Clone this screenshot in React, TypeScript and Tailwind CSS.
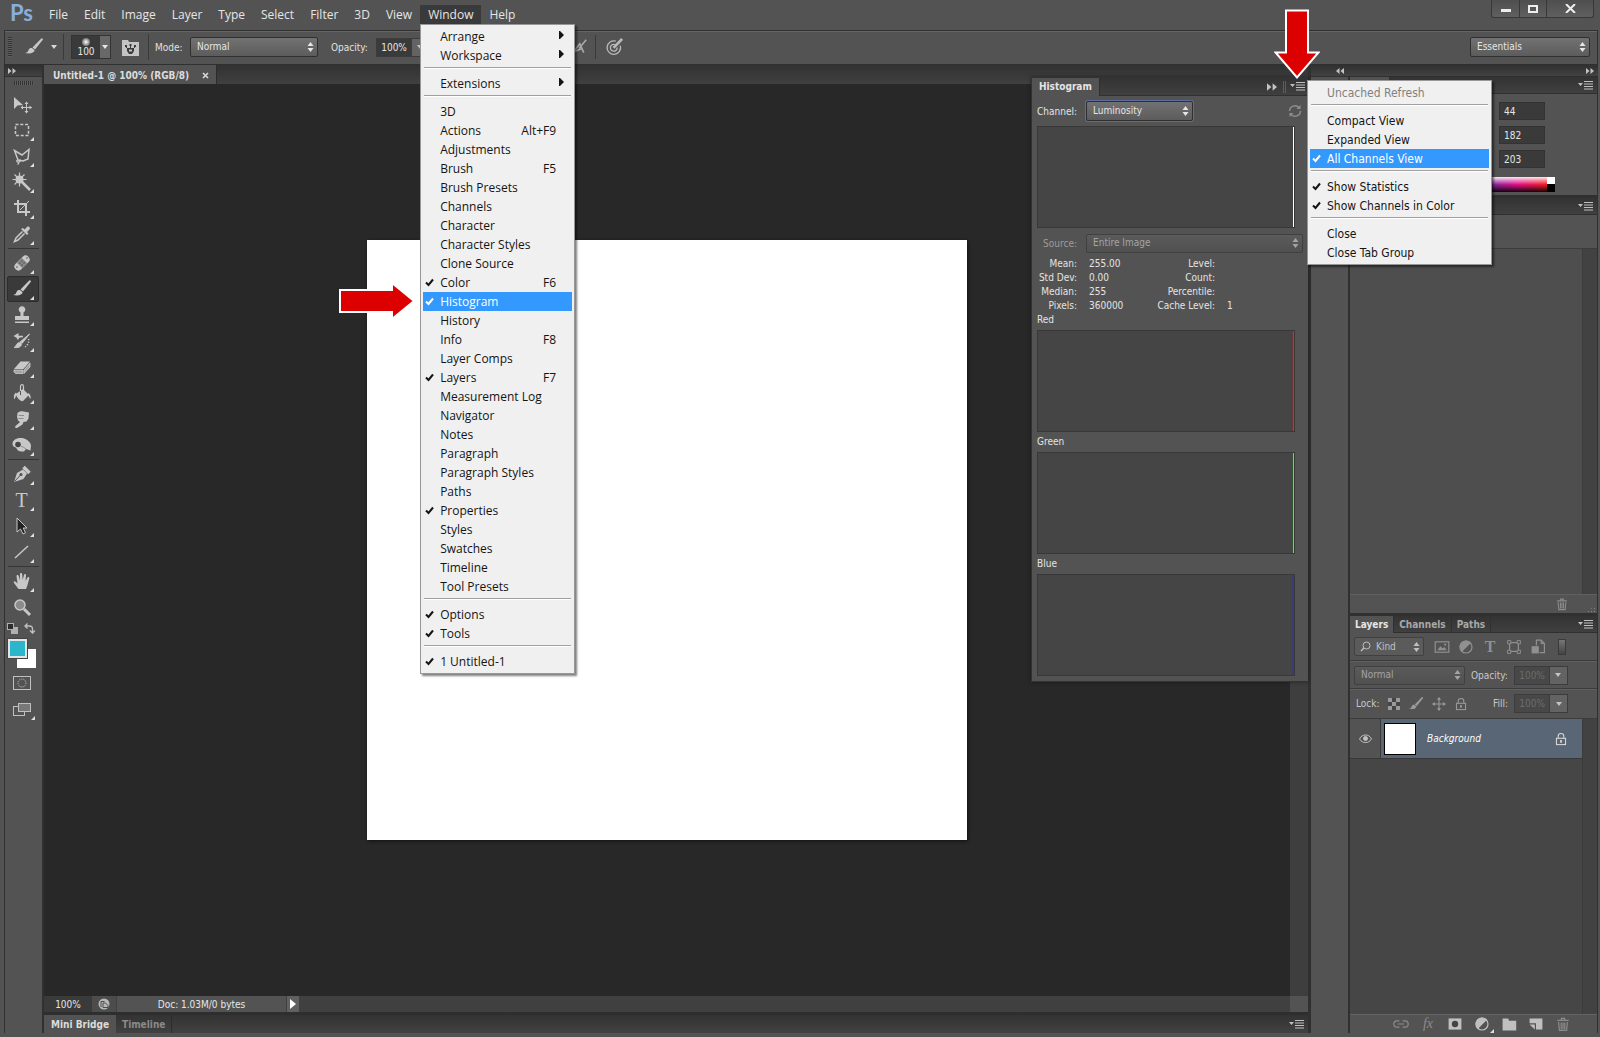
import type { ReactNode } from 'react';
import clsx from 'clsx';

interface MenuEntry {
    label: string;
    shortcut?: string;
    checked?: boolean;
    active?: boolean;
    disabled?: boolean;
    submenu?: boolean;
}

interface Tool {
    name: string;
    icon: ReactNode;
    flyout?: boolean;
    selected?: boolean;
}

const menuBefore = ['File', 'Edit', 'Image', 'Layer', 'Type', 'Select', 'Filter', '3D', 'View'];

const windowMenu: MenuEntry[][] = [
    [
        { label: 'Arrange', submenu: true },
        { label: 'Workspace', submenu: true },
    ],
    [{ label: 'Extensions', submenu: true }],
    [
        { label: '3D' },
        { label: 'Actions', shortcut: 'Alt+F9' },
        { label: 'Adjustments' },
        { label: 'Brush', shortcut: 'F5' },
        { label: 'Brush Presets' },
        { label: 'Channels' },
        { label: 'Character' },
        { label: 'Character Styles' },
        { label: 'Clone Source' },
        { label: 'Color', shortcut: 'F6', checked: true },
        { label: 'Histogram', checked: true, active: true },
        { label: 'History' },
        { label: 'Info', shortcut: 'F8' },
        { label: 'Layer Comps' },
        { label: 'Layers', shortcut: 'F7', checked: true },
        { label: 'Measurement Log' },
        { label: 'Navigator' },
        { label: 'Notes' },
        { label: 'Paragraph' },
        { label: 'Paragraph Styles' },
        { label: 'Paths' },
        { label: 'Properties', checked: true },
        { label: 'Styles' },
        { label: 'Swatches' },
        { label: 'Timeline' },
        { label: 'Tool Presets' },
    ],
    [
        { label: 'Options', checked: true },
        { label: 'Tools', checked: true },
    ],
    [{ label: '1 Untitled-1', checked: true }],
];

const histogramMenu: MenuEntry[][] = [
    [{ label: 'Uncached Refresh', disabled: true }],
    [
        { label: 'Compact View' },
        { label: 'Expanded View' },
        { label: 'All Channels View', checked: true, active: true },
    ],
    [
        { label: 'Show Statistics', checked: true },
        { label: 'Show Channels in Color', checked: true },
    ],
    [{ label: 'Close' }, { label: 'Close Tab Group' }],
];

const stats = [
    ['Mean:', '255.00', 'Level:', ''],
    ['Std Dev:', '0.00', 'Count:', ''],
    ['Median:', '255', 'Percentile:', ''],
    ['Pixels:', '360000', 'Cache Level:', '1'],
];

const channels = [
    { name: 'Red', line: 'w-[2px] border-l border-[#6c3434] bg-[#c03a3a]' },
    { name: 'Green', line: 'w-[2px] border-l border-[#2c5c30] bg-[#5fe05f]' },
    { name: 'Blue', line: 'w-[2px] border-l border-[#3a3a70] bg-[#3434b8]' },
];

function Svg({ size = 20, className, children }: { size?: number; className?: string; children: ReactNode }) {
    return (
        <svg
            width={size}
            height={size}
            viewBox="0 0 20 20"
            fill="none"
            stroke="currentColor"
            strokeWidth="1.5"
            className={clsx('shrink-0', className)}
            aria-hidden="true"
        >
            {children}
        </svg>
    );
}

const BrushShape = () => (
    <>
        <path d="M18.5 1.5 L19 2.5 L11 12.5 L8.5 10.5 L17.5 1.2z" fill="currentColor" stroke="none" />
        <path d="M8 11 L10.6 13.2 C10 16 6.500 17 1 16 C3.500 15.500 4 14.500 4.500 13 C5.200 11.200 6.500 10.700 8 11z" fill="currentColor" stroke="none" />
    </>
);

const MoveShape = () => (
    <>
        <path d="M10 2v16M2 10h16" />
        <path d="M10 0l3 4H7zM10 20l3-4H7zM0 10l4-3v6zM20 10l-4-3v6z" fill="currentColor" stroke="none" />
    </>
);

const TrashShape = () => (
    <>
        <path d="M3 5.500h14M8 5V3h4v2" />
        <path d="M4.500 7.500l1 10.500h9l1-10.500M7.800 8v8.500M10 8v8.500M12.200 8v8.500" />
    </>
);

const LockShape = () => (
    <>
        <path d="M6 9V6a4 4 0 0 1 8 0v3" />
        <rect x="3.500" y="9" width="13" height="9" />
        <path d="M10 11.500v4" strokeWidth="2.500" />
    </>
);

const HalfCircleShape = () => (
    <>
        <circle cx="10" cy="10" r="7.500" />
        <path d="M4.700 15.300A7.500 7.500 0 0 1 15.300 4.700z" fill="currentColor" />
    </>
);

const toolGroups: Tool[][] = [
    [
        {
            name: 'Move',
            icon: (
                <Svg>
                    <path d="M2 3v12l3.500-3.500L11 11z" fill="currentColor" stroke="none" />
                    <path d="M14.500 8.500v10M9.500 13.500h10" strokeWidth="1" />
                    <path d="M14.500 7.500l2 2.500h-4zM14.500 19.500l2-2.500h-4zM8.500 13.500l2.500-2v4zM20 13.500l-2.500-2v4z" fill="currentColor" stroke="none" />
                </Svg>
            ),
        },
        {
            name: 'Rectangular marquee',
            flyout: true,
            icon: (
                <Svg>
                    <rect x="3.500" y="4.500" width="13" height="11" strokeDasharray="3 1.800" />
                </Svg>
            ),
        },
        {
            name: 'Polygonal lasso',
            flyout: true,
            icon: (
                <Svg>
                    <path d="M6 14L2.500 4.500L10 9l7-5.500-1 9.500-5 2z" />
                    <path d="M6 14c-2 0-1.500 2.500.5 2s3-2 1-2.200M7 16c0 1.500-1 2-1.500 2.500" strokeWidth="1.200" />
                </Svg>
            ),
        },
        {
            name: 'Magic wand',
            flyout: true,
            icon: (
                <Svg>
                    <path d="M7.500 0.500v14M0.500 7.500h14M2.500 2.500l10 10M12.500 2.500l-10 10" strokeWidth="1.200" />
                    <circle cx="7.500" cy="7.500" r="4" fill="currentColor" stroke="none" />
                    <path d="M10 10l8 8" strokeWidth="2.500" />
                </Svg>
            ),
        },
        {
            name: 'Crop',
            flyout: true,
            icon: (
                <Svg>
                    <path d="M6 2v12h12M2 6h12v12" strokeWidth="2" />
                    <path d="M8 12L17 3" strokeWidth="1" />
                </Svg>
            ),
        },
        {
            name: 'Eyedropper',
            flyout: true,
            icon: (
                <Svg>
                    <path d="M10.500 7.500L4 14l-1.500 3.500L6 16l6.500-6.500" />
                    <path d="M9 5l6 6 1.500-1.500-1.500-1.500 2.500-2.500c1.500-1.500-1-4-2.500-2.500L12.500 5.500 11 4z" fill="currentColor" stroke="none" />
                </Svg>
            ),
        },
    ],
    [
        {
            name: 'Healing brush',
            flyout: true,
            icon: (
                <Svg>
                    <rect x="1" y="6" width="18" height="8" rx="4" transform="rotate(-45 10 10)" fill="currentColor" stroke="none" />
                    <rect x="6.500" y="6" width="7" height="8" transform="rotate(-45 10 10)" fill="#888888" stroke="none" />
                    <path d="M10 8v.1M12 10v.1M8 10v.1M10 12v.1M5 14v.1M15 5v.1" stroke="#444444" strokeLinecap="round" />
                </Svg>
            ),
        },
        { name: 'Brush', flyout: true, selected: true, icon: <Svg><BrushShape /></Svg> },
        {
            name: 'Clone stamp',
            flyout: true,
            icon: (
                <Svg>
                    <path d="M8.500 7.500a3.300 3.300 0 1 1 3 0L11.500 11H17v4H3v-4h5.500zM3 16.500h14V18H3z" fill="currentColor" stroke="none" />
                </Svg>
            ),
        },
        {
            name: 'History brush',
            flyout: true,
            icon: (
                <Svg>
                    <path d="M17.500 3L10 12.500 8 11zM7.500 11.500l2 2C9 16 6 17 2 16.500c3-1.500 2-4.500 5.500-5z" fill="currentColor" strokeWidth="1" />
                    <path d="M11 5.500H5M10 5.500c-2 0-4 1-4.500 3" />
                    <path d="M1.500 5l5-3v6z" fill="currentColor" stroke="none" />
                    <path d="M16.500 8c1 3-1 7.500-5 8.500" strokeDasharray="1.200 1.500" />
                </Svg>
            ),
        },
        {
            name: 'Eraser',
            flyout: true,
            icon: (
                <Svg>
                    <path d="M2 12L8.500 4.500H18L11.500 12z" fill="currentColor" stroke="none" />
                    <path d="M2 13h9v3.500H3.500L2 15zM12 13l6-7v4l-6 6.500z" fill="#a4a4a4" stroke="#d8d8d8" strokeWidth=".7" />
                </Svg>
            ),
        },
        {
            name: 'Paint bucket',
            flyout: true,
            icon: (
                <Svg>
                    <path d="M4 11l7-5 6 6-6 6c-2 1-6.500-3-7-7z" fill="currentColor" stroke="none" />
                    <path d="M8.500 11V3.500c0-2.500 3-2.500 3 0V8" strokeWidth="1.200" />
                    <path d="M8.500 8v4" stroke="#555555" strokeWidth="1" />
                    <path d="M4 9.500c-2.500 2-2.500 4.500-1.500 7C3.500 15 3.500 13 5 11.500z" fill="currentColor" stroke="none" />
                    <path d="M16 10c2.500 1 3 3.500 2.500 6-1.500-1-1.500-3-2.500-4z" fill="currentColor" stroke="none" />
                </Svg>
            ),
        },
        {
            name: 'Smudge',
            flyout: true,
            icon: (
                <Svg>
                    <path d="M5.500 4c2-2 4-2 6-1.500L17 3.500l-.5 6-2 3-3 .5-1 2.500-5.500 3.500c-1.500.5-2.500-1-1.500-2L8 13l-2-1.500-1-4z" fill="currentColor" stroke="none" />
                    <path d="M6.500 6.500H12M6.500 9.500h5" stroke="#8c8c8c" strokeWidth="1" />
                </Svg>
            ),
        },
        {
            name: 'Sponge',
            flyout: true,
            icon: (
                <Svg>
                    <path d="M.5 8c1-4 5-5.500 10-5 4 1 8 3.500 8.500 7.500l-.5 5-4.500-1.500-2 2.500c-5 .5-7-1.500-8-4C1.500 12 .2 10.500.5 8z" fill="currentColor" stroke="none" />
                    <circle cx="6" cy="9.500" r="2.800" fill="#444444" stroke="none" />
                    <path d="M9 11.500c1.500 0 3 1 5 2.500" stroke="#8c8c8c" strokeWidth="1" />
                </Svg>
            ),
        },
    ],
    [
        {
            name: 'Pen',
            flyout: true,
            icon: (
                <Svg>
                    <path d="M2 18L5 9l6-3.500 4 4L11.500 15z" fill="currentColor" stroke="none" />
                    <path d="M2.500 17.500L8.500 11" stroke="#505050" strokeWidth="1" />
                    <circle cx="9" cy="10.500" r="1.500" fill="#505050" stroke="none" />
                    <path d="M11.500 3l6 6" strokeWidth="3.500" />
                </Svg>
            ),
        },
        {
            name: 'Type',
            flyout: true,
            icon: <span className="w-5 text-center font-['Liberation_Serif',serif] text-[20px] leading-5">T</span>,
        },
        {
            name: 'Path selection',
            flyout: true,
            icon: (
                <Svg>
                    <path d="M5 2v14l3.500-3 2.500 5 2.500-1.200L11.200 12H15z" fill="#222222" strokeWidth="1" />
                </Svg>
            ),
        },
        { name: 'Line', flyout: true, icon: <Svg><path d="M3 16L16 4" /></Svg> },
    ],
    [
        {
            name: 'Hand',
            flyout: true,
            icon: (
                <Svg>
                    <path d="M6.500 18L2 12c-1-1.500.5-2.500 2-1l1.500 1.500L4.500 5c0-1.500 2-1.500 2.200 0l1 4.500L8 3c0-1.500 2-1.500 2.200 0l.5 6L12 4c.3-1.500 2-1 2 .2L13.500 10 15.500 6.500c.7-1.200 2.200-.5 1.800 1L15.500 14 14 18z" fill="currentColor" stroke="none" />
                </Svg>
            ),
        },
        {
            name: 'Zoom',
            icon: (
                <Svg>
                    <circle cx="8" cy="8" r="5" fill="#8b8b8b" />
                    <path d="M12 12l6 6" strokeWidth="3" />
                </Svg>
            ),
        },
    ],
];

function CheckMark() {
    return (
        <svg width="9" height="9" viewBox="0 0 9 9" fill="none" stroke="currentColor" strokeWidth="2" aria-hidden="true">
            <path d="M1 4.500l2.500 2.500L8 1.500" />
        </svg>
    );
}

function PopupMenu({ groups, className }: { groups: MenuEntry[][]; className?: string }) {
    return (
        <div
            role="menu"
            className={clsx(
                'absolute z-30 border border-[#979797] bg-[#f0f0f0] p-[2px] text-xs text-[#141414] shadow-[2px_2px_2px_rgba(0,0,0,0.5)]',
                className,
            )}
        >
            {groups.map((group, index) => (
                <div key={group[0].label}>
                    {index > 0 ? <div className="mx-px mt-[2px] mb-[5px] h-[2px] border-t border-[#a0a0a0] bg-white" /> : null}
                    {group.map((entry) => (
                        <button
                            key={entry.label}
                            type="button"
                            role="menuitem"
                            disabled={entry.disabled}
                            className={clsx(
                                'flex h-[19px] w-full items-center pr-4 text-left whitespace-nowrap',
                                entry.active && 'bg-[#3399ff] text-white',
                                entry.disabled && 'text-[#808080]',
                            )}
                        >
                            <span className="w-[17px] shrink-0 pl-[2px]">{entry.checked ? <CheckMark /> : null}</span>
                            <span className="flex-1">{entry.label}</span>
                            {entry.shortcut ? <span>{entry.shortcut}</span> : null}
                            {entry.submenu ? (
                                <svg width="5" height="8" viewBox="0 0 5 8" className="-mr-2 mb-1" fill="currentColor" aria-hidden="true">
                                    <path d="M0 0h1l4 4-4 4H0z" />
                                </svg>
                            ) : null}
                        </button>
                    ))}
                </div>
            ))}
        </div>
    );
}

function UpDown() {
    return (
        <svg
            width="7"
            height="10"
            viewBox="0 0 7 10"
            fill="currentColor"
            className="pointer-events-none absolute inset-y-0 right-1 my-auto"
            aria-hidden="true"
        >
            <path d="M3.500 0L6.500 4h-6zM3.500 10l3-4h-6z" />
        </svg>
    );
}

function Dropdown({ label, id, value, className, muted, focus }: {
    label: string;
    id: string;
    value: string;
    className?: string;
    muted?: boolean;
    focus?: boolean;
}) {
    return (
        <span className={clsx('relative block shrink-0', muted ? 'text-[#a4a4a4]' : 'text-[#e6e6e6]', className)}>
            <select
                id={id}
                aria-label={label}
                className={clsx(
                    'block w-full appearance-none rounded-[2px] border bg-linear-to-b px-[6px] leading-4 outline-none',
                    muted ? 'h-[19px] border-[#404040] from-[#5b5b5b] to-[#505050]' : 'h-5 border-[#303030] from-[#727272] to-[#5c5c5c]',
                    focus && 'shadow-[0_0_0_1px_#5c6c9c]',
                )}
            >
                <option>{value}</option>
            </select>
            <UpDown />
        </span>
    );
}

function PanelMenuIcon() {
    return (
        <svg width="15" height="9" viewBox="0 0 15 9" className="shrink-0 text-[#c0c0c0]" fill="currentColor" aria-hidden="true">
            <path d="M0 2h5L2.500 5zM6 0h9v1H6zM6 2.500h9v1H6zM6 5h9v1H6zM6 7.500h9v1H6z" />
        </svg>
    );
}

function DoubleArrow({ left, large }: { left?: boolean; large?: boolean }) {
    return (
        <svg
            width={large ? 10 : 8}
            height={large ? 8 : 6}
            viewBox="0 0 8 6"
            className={clsx('shrink-0 text-[#c4c4c4]', left && 'rotate-180')}
            fill="currentColor"
            aria-hidden="true"
        >
            <path d="M0 0l3.500 3L0 6zM4.500 0L8 3 4.500 6z" />
        </svg>
    );
}

function Caret() {
    return (
        <svg width="6" height="4" viewBox="0 0 6 4" fill="currentColor" className="shrink-0" aria-hidden="true">
            <path d="M0 0h6L3 4z" />
        </svg>
    );
}

function FlyoutMark({ className }: { className?: string }) {
    return (
        <svg width="4" height="4" viewBox="0 0 4 4" fill="#e0e0e0" className={clsx('absolute', className)} aria-hidden="true">
            <path d="M4 0v4H0z" />
        </svg>
    );
}

function PercentField({ label, id, bright }: { label: string; id: string; bright?: boolean }) {
    return (
        <div className="flex items-center">
            <label htmlFor={id} className={clsx(bright ? 'mr-2' : 'mr-[6px]')}>{label}</label>
            <input
                id={id}
                defaultValue="100%"
                className={clsx(
                    'h-[19px] w-9 border border-[#3c3c3c] pr-1 text-right outline-none',
                    bright ? 'bg-[#3a3a3a] text-[#e6e6e6]' : 'bg-[#484848] text-[#6c6c6c]',
                )}
            />
            <button
                type="button"
                aria-label={`${label} slider`}
                className="flex h-[19px] w-[18px] items-center justify-center border border-l-0 border-[#3c3c3c] bg-[#636363] text-[#c4c4c4]"
            >
                <Caret />
            </button>
        </div>
    );
}

function MenuBar() {
    return (
        <header className="flex h-[30px] items-start justify-between pl-[10px]">
            <div className="flex">
                <span className="w-[31px] font-['Lato','Open_Sans',sans-serif] text-[22px] leading-[26px] font-bold text-[#8aaedb]">Ps</span>
                <nav className="flex items-start pt-[5px] text-xs text-[#e6e6e6]">
                    {menuBefore.map((item) => (
                        <button key={item} type="button" className="h-[19px] px-2">{item}</button>
                    ))}
                    <div className="relative h-[19px]">
                        <button type="button" aria-expanded="true" className="block h-[19px] bg-[#3a3a3a] px-2">Window</button>
                        <PopupMenu groups={windowMenu} className="top-full left-0 w-[155px]" />
                        <svg
                            width="78"
                            height="40"
                            viewBox="0 0 78 40"
                            className="absolute top-[276px] right-full z-40 mr-1"
                            aria-hidden="true"
                        >
                            <path d="M2 9h52V2l22 18-22 18v-7H2z" fill="#dd0000" stroke="#ffffff" strokeWidth="2" />
                        </svg>
                    </div>
                    <button type="button" className="h-[19px] px-2">Help</button>
                </nav>
            </div>
            <div className="mr-[6px] flex h-[18px] rounded-b-[3px] border border-t-0 border-[#383838] bg-linear-to-b from-[#4e4e4e] to-[#606060] text-[#eeeeee]">
                <button type="button" aria-label="Minimize" className="flex w-7 items-center justify-center border-r border-[#383838]">
                    <span className="mt-1 h-[3px] w-[10px] bg-current" />
                </button>
                <button type="button" aria-label="Restore" className="flex w-[27px] items-center justify-center border-r border-[#383838]">
                    <span className="h-2 w-[10px] border-2 border-current" />
                </button>
                <button type="button" aria-label="Close" className="flex w-[46px] items-center justify-center">
                    <svg width="11" height="9" viewBox="0 0 11 9" stroke="currentColor" strokeWidth="2" aria-hidden="true">
                        <path d="M1 0l9 9M10 0L1 9" />
                    </svg>
                </button>
            </div>
        </header>
    );
}

function OptionsBar() {
    return (
        <div className="mr-[2px] ml-1 flex h-[35px] items-center justify-between border border-[#303030] pr-[7px] pb-px pl-[3px] shadow-[inset_0_1px_0_#656565]">
            <div className="flex items-center">
                <span className="h-5 w-1 bg-[repeating-linear-gradient(to_bottom,#333333_0_1px,#5e5e5e_1px_2px)]" />
                <Svg className="ml-3 text-[#c8c8c8]"><BrushShape /></Svg>
                <span className="ml-[7px] text-[#d8d8d8]"><Caret /></span>
                <span className="ml-[6px] h-[26px] w-px bg-[#3a3a3a]" />
                <button type="button" aria-label="Brush preset" className="ml-[7px] flex h-6 border border-[#333333] text-[#e6e6e6]">
                    <span className="flex w-7 flex-col items-center justify-end bg-[#3a3a3a]">
                        <span className="h-2 w-2 rounded-full bg-[radial-gradient(#ffffff,#3a3a3a)]" />
                        <span className="leading-3">100</span>
                    </span>
                    <span className="flex w-[10px] items-center justify-center self-stretch bg-[#686868]"><Caret /></span>
                </button>
                <svg width="17" height="17" viewBox="0 0 17 17" className="ml-[11px]" aria-hidden="true">
                    <path d="M0 1h6l1 2h10v14H0z" fill="#c4c4c4" />
                    <path d="M3 6h2v2H3zM7.500 5h2v2h-2zM12 6h2v2h-2z" fill="#3a3a3a" />
                    <path d="M4 8l2 2M13 8l-2 2M8.500 6v3" stroke="#3a3a3a" />
                    <path d="M5 9h7v3l-2 3H7l-2-3z" fill="#3a3a3a" />
                    <path d="M7 10.500h3v2H7z" fill="#c4c4c4" />
                </svg>
                <span className="ml-[9px] h-[26px] w-px bg-[#3a3a3a]" />
                <label htmlFor="brush-mode" className="ml-[6px] w-[35px] text-[#e0e0e0]">Mode:</label>
                <Dropdown id="brush-mode" label="Mode" value="Normal" className="w-32" />
                <div className="ml-[13px] text-[#e0e0e0]">
                    <PercentField label="Opacity:" id="brush-opacity" bright />
                </div>
                <Svg size={16} className="ml-[141px] text-[#a8a8a8]">
                    <path d="M19 1l-9 11M3 16l8-10 5 11M1 17l13-5" strokeWidth="2" />
                </Svg>
                <span className="ml-2 h-6 w-px bg-[#3a3a3a]" />
                <Svg size={18} className="ml-[9px] text-[#b8b8b8]">
                    <path d="M12 3.500a7.500 7.500 0 1 0 5 5M11.500 7.500a3.800 3.800 0 1 0 2 3" />
                    <path d="M19 1l-9.500 10" strokeWidth="3" />
                </Svg>
            </div>
            <Dropdown id="workspace" label="Workspace" value="Essentials" className="w-[120px]" />
        </div>
    );
}

function Toolbar() {
    return (
        <aside className="flex w-[38px] shrink-0 flex-col border-l border-[#303030] bg-[#535353] text-[#c8c8c8]">
            <div className="flex h-3 items-center border-b border-[#303030] bg-linear-to-b from-[#303030] to-[#424242] pl-[3px]">
                <DoubleArrow />
            </div>
            <span className="mx-auto mt-1 mb-[6px] h-1 w-5 shrink-0 bg-[repeating-linear-gradient(to_right,#333333_0_1px,#5e5e5e_1px_2px)]" />
            {toolGroups.map((group, index) => (
                <div key={group[0].name} className="px-[2px]">
                    {index > 0 ? <div className="mx-px my-px h-px bg-[#363636]" /> : null}
                    {group.map((tool) => (
                        <button
                            key={tool.name}
                            type="button"
                            aria-label={tool.name}
                            className={clsx(
                                'relative flex h-[26px] w-8 items-center justify-center rounded-[2px] border pr-[3px]',
                                tool.selected ? 'border-[#2c2c2c] bg-[#3a3a3a]' : 'border-transparent',
                            )}
                        >
                            {tool.icon}
                            {tool.flyout ? <FlyoutMark className="right-1 bottom-px" /> : null}
                        </button>
                    ))}
                </div>
            ))}
            <div className="mt-[2px] flex h-3 items-center justify-between pr-[7px] pl-[2px]">
                <svg width="11" height="11" viewBox="0 0 11 11" aria-hidden="true">
                    <rect x="4" y="4" width="7" height="7" fill="#b0b0b0" />
                    <rect x=".5" y=".5" width="6" height="6" fill="#2c2c2c" stroke="#b0b0b0" />
                </svg>
                <svg width="11" height="11" viewBox="0 0 11 11" fill="none" stroke="#c0c0c0" strokeWidth="1.300" aria-hidden="true">
                    <path d="M1 3h4.500c2 0 3 1 3 3v4M3.500 .5L1 3l2.500 2.500M6 7.500L8.500 10 11 7.500" />
                </svg>
            </div>
            <div className="relative mt-[5px] ml-[3px] h-[29px]">
                <button type="button" aria-label="Background color" className="absolute top-[10px] left-[9px] size-[19px] bg-white" />
                <button type="button" aria-label="Foreground color" className="absolute top-0 left-0 size-[19px] border-2 border-[#e4e4e4] bg-[#2cb6cb] outline outline-[#444444]" />
            </div>
            <button type="button" aria-label="Quick mask" className="mt-2 ml-2 h-[14px] w-[18px]">
                <svg width="18" height="14" viewBox="0 0 18 14" fill="none" stroke="#c0c0c0" aria-hidden="true">
                    <rect x=".5" y=".5" width="17" height="13" />
                    <circle cx="9" cy="7" r="4" strokeDasharray="1.200 1" />
                </svg>
            </button>
            <button type="button" aria-label="Screen mode" className="relative mt-3 ml-2 h-[18px] w-6">
                <svg width="24" height="18" viewBox="0 0 24 18" fill="none" stroke="#c0c0c0" aria-hidden="true">
                    <rect x=".5" y="4.500" width="11" height="9" />
                    <rect x="5.500" y="1.500" width="12" height="8" fill="#787878" />
                </svg>
                <FlyoutMark className="right-[2px] bottom-0" />
            </button>
        </aside>
    );
}

function Graph({ line }: { line: string }) {
    return (
        <div className="mr-2 flex h-[102px] justify-end border border-[#383838] bg-[#454545]">
            <span className={line} />
        </div>
    );
}

function HistogramPanel() {
    return (
        <section className="absolute top-3 right-0 z-20 w-[277px] border border-r-0 border-[#333333] bg-[#535353] pb-[2px] text-[#e4e4e4] shadow-[0_0_4px_rgba(0,0,0,0.4)]">
            <div className="flex h-[18px] items-center border-b border-[#303030] bg-linear-to-b from-[#333333] to-[#404040] pr-[3px]">
                <h2 className="flex h-[18px] items-center border-r border-[#303030] bg-[#535353] px-[7px] font-bold">Histogram</h2>
                <span className="mr-[6px] ml-auto"><DoubleArrow large /></span>
                <span className="mr-1 h-3 w-[3px] border-x border-[#5e5e5e]" />
                <button type="button" aria-label="Histogram panel menu"><PanelMenuIcon /></button>
            </div>
            <div className="px-[5px]">
                <div className="mt-[5px] flex h-5 items-center">
                    <label htmlFor="channel" className="w-10 text-right">Channel:</label>
                    <Dropdown id="channel" label="Channel" value="Luminosity" focus className="ml-[9px] w-[107px]" />
                    <svg width="14" height="14" viewBox="0 0 14 14" className="mr-px ml-auto text-[#8e8e8e]" fill="none" stroke="currentColor" strokeWidth="1.500" aria-hidden="true">
                        <path d="M1.500 7a5.500 5.500 0 0 1 9.500-3.500M12.500 7a5.500 5.500 0 0 1-9.500 3.500" />
                        <path d="M12.500 1v4h-4zM1.500 13V9h4z" fill="currentColor" stroke="none" />
                    </svg>
                </div>
                <div className="mt-[5px]"><Graph line="w-px bg-white" /></div>
                <div className="mt-[5px] flex h-5 items-center text-[#9b9b9b]">
                    <label htmlFor="source" className="w-10 text-right">Source:</label>
                    <Dropdown id="source" label="Source" value="Entire Image" muted className="ml-[9px] w-[217px]" />
                </div>
                <dl className="mt-1 leading-[14px]">
                    {stats.map(([a, b, c, d]) => (
                        <div key={a} className="flex">
                            <dt className="w-10 text-right whitespace-nowrap">{a}</dt>
                            <dd className="ml-3 w-16">{b}</dd>
                            <dt className="w-[62px] text-right whitespace-nowrap">{c}</dt>
                            <dd className="ml-3">{d}</dd>
                        </div>
                    ))}
                </dl>
                {channels.map((channel) => (
                    <div key={channel.name} className="mb-[3px]">
                        <h3 className="mb-[3px] leading-[14px]">{channel.name}</h3>
                        <Graph line={channel.line} />
                    </div>
                ))}
            </div>
            <PopupMenu groups={histogramMenu} className="top-[2px] left-full -ml-px w-[185px]" />
            <svg width="46" height="70" viewBox="0 0 46 70" className="absolute -top-[69px] right-[-12px] z-40" aria-hidden="true">
                <path d="M12 1.500h22v42h10.500L23 68.500 1.500 43.500H12z" fill="#dd0000" stroke="#ffffff" strokeWidth="2" />
            </svg>
        </section>
    );
}

function DocumentArea() {
    return (
        <main className="relative ml-[2px] flex min-w-0 flex-1 flex-col bg-[#2e2e2e]">
            <div className="flex h-[19px] shrink-0 bg-linear-to-b from-[#323232] to-[#404040]">
                <div className="flex items-center border-r border-[#2c2c2c] bg-[#535353] pt-px pr-[7px] pl-[9px] font-bold text-[#dcdcdc]">
                    Untitled-1 @ 100% (RGB/8)
                    <button type="button" aria-label="Close document" className="ml-[13px]">
                        <svg width="7" height="7" viewBox="0 0 7 7" stroke="currentColor" strokeWidth="1.500" aria-hidden="true">
                            <path d="M1 1l5 5M6 1L1 6" />
                        </svg>
                    </button>
                </div>
            </div>
            <div className="flex min-h-0 flex-1">
                <div className="flex min-w-0 flex-1 items-center justify-center bg-[#282828]">
                    <div className="size-[600px] bg-white shadow-[1px_1px_3px_#111111]" />
                </div>
                <div className="w-[18px] bg-[#3e3e3e]" />
            </div>
            <div className="flex h-4 shrink-0 text-[#e6e6e6]">
                <span className="flex w-12 items-center justify-center bg-[#3a3a3a]">100%</span>
                <span className="flex w-6 items-center justify-center bg-[#4c4c4c]">
                    <svg width="12" height="12" viewBox="0 0 12 12" aria-hidden="true">
                        <circle cx="6" cy="6" r="5.500" fill="#b8b8b8" />
                        <path d="M3 9V3.500h3.500M5 9.500V5h2.500L10 7.500v2z" fill="none" stroke="#4c4c4c" />
                    </svg>
                </span>
                <span className="flex w-[171px] items-center justify-center border-x border-[#404040] bg-[#535353]">Doc: 1.03M/0 bytes</span>
                <button type="button" aria-label="Status options" className="flex w-3 items-center justify-center bg-[#606060]">
                    <svg width="6" height="10" viewBox="0 0 6 10" fill="white" aria-hidden="true"><path d="M0 0l6 5-6 5z" /></svg>
                </button>
                <span className="flex-1 bg-[#404040]" />
                <span className="w-[18px] bg-[#535353]" />
            </div>
            <div className="mt-[3px] flex h-[18px] shrink-0 items-stretch bg-linear-to-b from-[#333333] to-[#414141] font-bold">
                <button type="button" className="bg-[#535353] px-[7px] text-[#dcdcdc]">Mini Bridge</button>
                <button type="button" className="border-r border-[#2c2c2c] px-[6px] text-[#8a8a8a]">Timeline</button>
                <button type="button" aria-label="Bottom panel menu" className="mr-1 ml-auto"><PanelMenuIcon /></button>
            </div>
            <HistogramPanel />
        </main>
    );
}

function PanelHeader({ label, children }: { label: string; children?: ReactNode }) {
    return (
        <div className="flex h-[17px] shrink-0 items-center border-b border-[#303030] bg-linear-to-b from-[#333333] to-[#404040] pr-1 font-bold">
            {children}
            <button type="button" aria-label={label} className="ml-auto"><PanelMenuIcon /></button>
        </div>
    );
}

function LayersPanel() {
    return (
        <section className="flex min-h-0 flex-1 flex-col bg-[#535353] text-[#c8c8c8]">
            <PanelHeader label="Layers panel menu">
                <button type="button" className="h-[17px] border-r border-[#303030] bg-[#535353] px-[5px] text-[#e6e6e6]">Layers</button>
                <button type="button" className="h-[17px] border-r border-[#303030] px-[5px] text-[#a8a8a8]">Channels</button>
                <button type="button" className="h-[17px] border-r border-[#303030] px-[5px] text-[#a8a8a8]">Paths</button>
            </PanelHeader>
            <div className="flex h-7 shrink-0 items-center border-b border-[#3c3c3c] pl-1 text-[#909090]">
                <span className="relative block w-[70px] text-[#c0c0c0]">
                    <select aria-label="Filter type" className="block h-[19px] w-full appearance-none rounded-[2px] border border-[#404040] bg-[#5b5b5b] pl-[21px] leading-4">
                        <option>Kind</option>
                    </select>
                    <svg width="11" height="11" viewBox="0 0 11 11" fill="none" stroke="currentColor" className="pointer-events-none absolute inset-y-0 left-[6px] my-auto" aria-hidden="true">
                        <circle cx="6.500" cy="4.500" r="3.500" />
                        <path d="M4 7L1 10" strokeWidth="1.500" />
                    </svg>
                    <UpDown />
                </span>
                <div className="ml-[10px] flex items-center gap-2">
                    <Svg size={16}>
                        <rect x="1.500" y="3.500" width="17" height="13" />
                        <path d="M4 14l4-5 3 3 2-2 3 4z" fill="currentColor" stroke="none" />
                        <circle cx="14" cy="7" r="1.300" fill="currentColor" stroke="none" />
                    </Svg>
                    <Svg size={16}><HalfCircleShape /></Svg>
                    <span className="w-4 text-center font-['Liberation_Serif',serif] text-base leading-4 font-bold">T</span>
                    <Svg size={16}>
                        <rect x="4.500" y="4.500" width="11" height="11" />
                        <path d="M2 2h4v4H2zM14 2h4v4h-4zM2 14h4v4H2zM14 14h4v4h-4z" fill="#535353" strokeWidth="1.200" />
                    </Svg>
                    <Svg size={16}>
                        <path d="M8 8V1.500h6l4 4V17h-6M14 1.500v4h4" />
                        <path d="M2 9h9v9H2z" fill="currentColor" stroke="none" />
                    </Svg>
                    <button type="button" aria-label="Toggle filter" className="ml-1 h-4 w-2 border border-[#3a3a3a] bg-linear-to-b from-[#777777] to-[#444444]" />
                </div>
            </div>
            <div className="flex h-7 shrink-0 items-center border-y border-t-[#606060] border-b-[#3c3c3c] pl-1">
                <Dropdown id="blend" label="Blend mode" value="Normal" muted className="mr-[6px] w-[111px]" />
                <PercentField label="Opacity:" id="layer-opacity" />
            </div>
            <div className="flex h-[30px] shrink-0 items-center border-y border-t-[#606060] border-b-[#3c3c3c] pr-[29px] pb-px pl-[6px]">
                <span>Lock:</span>
                <div className="ml-2 flex items-center gap-2 text-[#9a9a9a]">
                    <svg width="12" height="12" viewBox="0 0 12 12" aria-hidden="true">
                        <path d="M0 0h12v12H0z" fill="#444444" />
                        <path d="M0 0h4v4H0zM8 0h4v4H8zM4 4h4v4H4zM0 8h4v4H0zM8 8h4v4H8z" fill="#9a9a9a" />
                    </svg>
                    <Svg size={16}><BrushShape /></Svg>
                    <Svg size={14}><MoveShape /></Svg>
                    <Svg size={14}><LockShape /></Svg>
                </div>
                <div className="ml-auto"><PercentField label="Fill:" id="layer-fill" /></div>
            </div>
            <div className="flex min-h-0 flex-1 bg-[#464646]">
                <div className="min-w-0 flex-1">
                    <div className="flex h-10 border-b border-[#383838] bg-[#535353]">
                        <button type="button" aria-label="Layer visibility" className="flex w-[31px] items-center justify-center border-r border-[#3a3a3a]">
                            <svg width="13" height="9" viewBox="0 0 13 9" fill="none" stroke="#c0c0c0" aria-hidden="true">
                                <path d="M.5 5C2 2 4 1 6.500 1S11 2 12.500 5C11 7.500 9 8.500 6.500 8.500S2 7.500 .5 5z" />
                                <circle cx="6.500" cy="4.500" r="2" fill="#c0c0c0" />
                            </svg>
                        </button>
                        <div className="flex flex-1 items-center bg-[#596675] pr-[14px] pl-[3px] text-white">
                            <span className="size-8 border border-black bg-white" />
                            <span className="ml-[11px] flex-1 italic">Background</span>
                            <Svg size={14} className="text-[#d8d8d8]"><LockShape /></Svg>
                        </div>
                    </div>
                </div>
                <div className="w-[15px] border-l border-[#3c3c3c] bg-[#424242]" />
            </div>
            <footer className="flex h-[19px] shrink-0 items-center justify-end gap-[11px] border-t border-[#636363] pr-[26px] text-[#c0c0c0]">
                <Svg size={16} className="text-[#8c8c8c]">
                    <path d="M8 6H5a4 4 0 0 0 0 8h3M12 6h3a4 4 0 0 1 0 8h-3M6 10h8" />
                </Svg>
                <span className="w-4 text-center font-['Liberation_Serif',serif] text-sm leading-4 text-[#8c8c8c] italic">fx</span>
                <Svg size={16}>
                    <path d="M2 3h16v14H2z" fill="currentColor" stroke="none" />
                    <circle cx="10" cy="10" r="4" fill="#444444" stroke="none" />
                </Svg>
                <span className="relative">
                    <Svg size={16}><HalfCircleShape /></Svg>
                    <FlyoutMark className="-right-1 -bottom-px" />
                </span>
                <Svg size={16}><path d="M2 3h7l1 3h9v12H2z" fill="currentColor" stroke="none" /></Svg>
                <Svg size={16}>
                    <path d="M2 3h16v14h-8V9H2z" fill="currentColor" stroke="none" />
                    <path d="M2 10.500h6.500V17z" fill="currentColor" stroke="none" />
                </Svg>
                <Svg size={16} className="text-[#8c8c8c]"><TrashShape /></Svg>
            </footer>
        </section>
    );
}

function RightDock() {
    return (
        <aside className="ml-[3px] flex w-[287px] shrink-0 flex-col">
            <div className="flex h-3 shrink-0 items-center border-b border-[#303030] bg-linear-to-b from-[#303030] to-[#424242] pr-1">
                <div className="flex w-9 justify-end pr-[3px]"><DoubleArrow left /></div>
                <span className="ml-auto"><DoubleArrow /></span>
            </div>
            <div className="flex min-h-0 flex-1">
                <div className="w-[37px] shrink-0 bg-[#535353]" />
                <div className="flex min-w-0 flex-1 flex-col border-x-2 border-r border-[#303030]">
                    <PanelHeader label="Color panel menu">
                        <span className="h-[17px] w-10 border-r border-[#303030] bg-[#535353]" />
                    </PanelHeader>
                    <section className="bg-[#535353] pt-2 pr-[42px] pb-[3px]">
                        <div className="flex flex-col items-end gap-[6px] pr-[10px]">
                            {['44', '182', '203'].map((value, index) => (
                                <input
                                    key={value}
                                    aria-label={['Red value', 'Green value', 'Blue value'][index]}
                                    defaultValue={value}
                                    className="h-[18px] w-[46px] border border-[#333333] bg-[#3a3a3a] px-1 text-[#e6e6e6] outline-none"
                                />
                            ))}
                        </div>
                        <div className="mt-[9px] ml-2 flex h-[15px]">
                            <span className="flex-1 bg-[linear-gradient(to_bottom,rgba(255,255,255,0.9),transparent_50%,rgba(0,0,0,0.9)),linear-gradient(to_right,#e02020,#e0e020_17%,#20c020_34%,#20c0c0_50%,#2020c0_62%,#7a2a9a_70%,#e0108a_84%,#f02020)]" />
                            <span className="w-2 bg-[linear-gradient(to_bottom,white_50%,black_50%)]" />
                        </div>
                    </section>
                    <div className="h-[3px] shrink-0 bg-[#303030]" />
                    <PanelHeader label="Properties panel menu" />
                    <div className="h-[34px] shrink-0 border-b border-[#3c3c3c] bg-[#535353]" />
                    <div className="flex h-[345px] shrink-0 bg-[#4e4e4e]">
                        <span className="flex-1" />
                        <span className="w-[15px] border-l border-[#3c3c3c] bg-[#424242]" />
                    </div>
                    <div className="flex h-[19px] shrink-0 items-center justify-end border-t border-[#606060] bg-[#535353] text-[#8c8c8c]">
                        <Svg size={14}><TrashShape /></Svg>
                        <span className="mt-2 ml-[18px] h-[9px] w-[10px] bg-[radial-gradient(#8c8c8c_1px,transparent_1px)] bg-size-[3px_3px] [clip-path:polygon(100%_0,100%_100%,0_100%)]" />
                    </div>
                    <div className="h-[3px] shrink-0 bg-[#303030]" />
                    <LayersPanel />
                </div>
            </div>
        </aside>
    );
}

export default function App() {
    return (
        <div className="flex h-screen flex-col overflow-hidden bg-[#535353] font-['Open_Sans',sans-serif]">
            <MenuBar />
            <div className="flex min-h-0 flex-1 flex-col font-['DejaVu_Sans_Condensed','DejaVu_Sans',sans-serif] text-[10px]">
                <OptionsBar />
                <div className="mr-[2px] ml-1 flex min-h-0 flex-1 bg-[#303030]">
                    <Toolbar />
                    <DocumentArea />
                    <RightDock />
                </div>
            </div>
            <div className="h-1 shrink-0" />
        </div>
    );
}
